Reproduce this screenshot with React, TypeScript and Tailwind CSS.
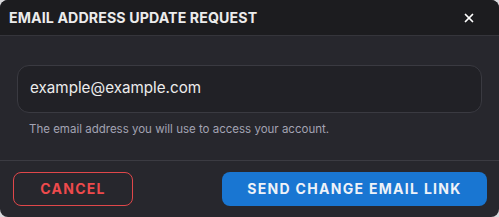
import { X } from 'lucide-react';

export default function App() {
  return (
    <div className="w-[499px] h-[217px] bg-[#d9d9dc] font-['Inter','Liberation_Sans',sans-serif]">
      <div className="w-full h-full rounded-lg overflow-hidden bg-[#27272d] flex flex-col">
        {/* header */}
        <div className="h-[36px] shrink-0 flex items-center justify-between pl-[9px] pr-[23px] bg-[#1c1c1f] border-b border-[#35353b]">
          <h2 className="text-[14.2px] font-bold text-[#ececec] tracking-[0.1px]">EMAIL ADDRESS UPDATE REQUEST</h2>
          <X className="w-[14px] h-[14px] text-white mt-[1px]" strokeWidth={3} />
        </div>

        {/* body */}
        <div className="flex-1 px-[17px] pt-[29px]">
          <div className="h-[48px] rounded-xl border border-[#3a3a41] bg-[#212126] flex items-center px-[12px]">
            <span className="text-[15.2px] text-[#ececec] mt-[-2px]">example@example.com</span>
          </div>
          <p className="text-[11.5px] text-[#a3a3b3] mt-[8px] pl-[12px]">
            The email address you will use to access your account.
          </p>
        </div>

        {/* footer */}
        <div className="h-[57px] shrink-0 border-t border-[#3b3b42] flex items-center justify-between pl-[13px] pr-[12px] pb-[1px]">
          <button className="w-[120px] h-[34px] rounded-lg border border-[#e0474a] text-[#ee4a4c] text-[14px] font-bold tracking-[1.3px]">
            CANCEL
          </button>
          <button className="w-[265px] h-[34px] rounded-lg bg-[#1976d2] text-[#eef2f8] text-[14px] font-bold tracking-[1.3px]">
            SEND CHANGE EMAIL LINK
          </button>
        </div>
      </div>
    </div>
  );
}
